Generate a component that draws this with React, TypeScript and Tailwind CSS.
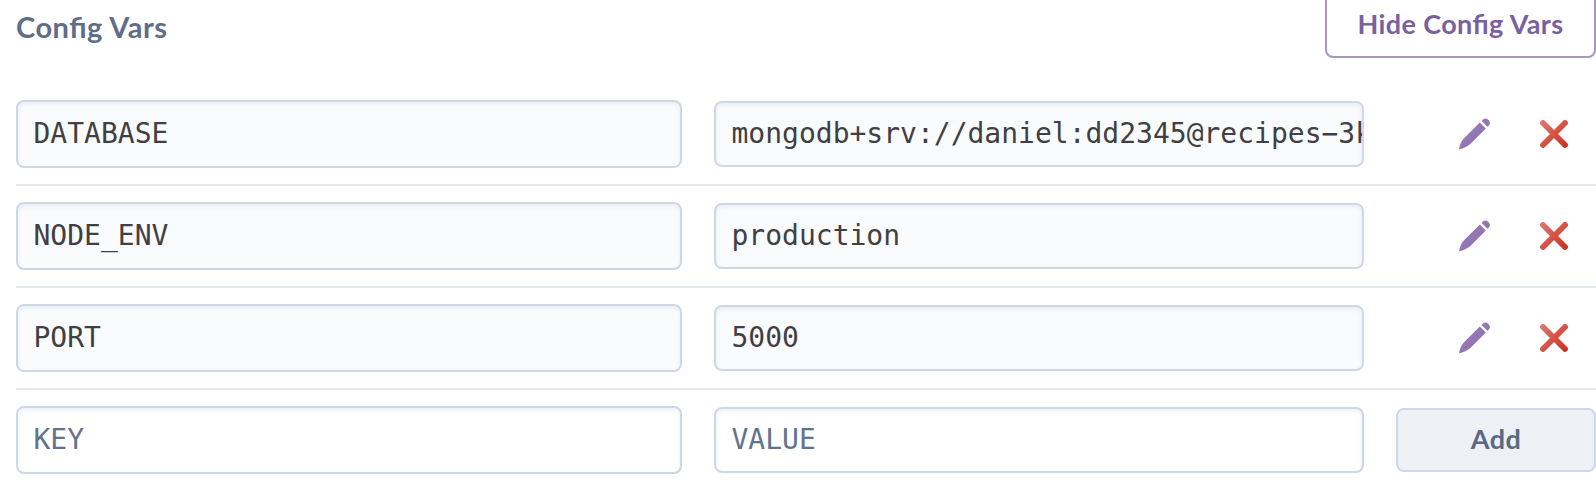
import React from "react";

const vars = [
  { key: "DATABASE", value: "mongodb+srv://daniel:dd2345@recipes−3k" },
  { key: "NODE_ENV", value: "production" },
  { key: "PORT", value: "5000" },
];

const mono = "font-['DejaVu_Sans_Mono',monospace] text-[28px] leading-[32px] whitespace-pre";
const field =
  "flex items-center overflow-hidden rounded-lg border-2 border-[#cfd7e6] pl-[15.5px] shadow-[inset_0_2px_4px_rgba(207,215,230,0.4)]";

function Field({ text, tall, blank }: { text: string; tall?: boolean; blank?: boolean }) {
  return (
    <div
      className={`${field} ${tall ? "h-[68px] w-[666px]" : "h-[66px] w-[650px]"} ${
        blank ? "bg-white text-[#62738d]" : "bg-[#fafbfd] text-[#3f3f44]"
      }`}
    >
      <span className={`${mono} min-w-0`}>{text}</span>
    </div>
  );
}

function Pencil() {
  return (
    <svg width="32" height="32" viewBox="0 0 32 32" className="block">
      <defs>
        <linearGradient id="pencil" x1="0" y1="0" x2="1" y2="1">
          <stop offset="0" stopColor="#9e7fbd" />
          <stop offset="1" stopColor="#8a6cab" />
        </linearGradient>
      </defs>
      <g fill="url(#pencil)">
        <path d="M20.8 4.5 26.8 10.4 11.3 26C8.4 28.8 4.4 30.3 0 31.2 .8 26.8 2.2 23 5 20.2Z" />
        <path d="M22.5 2.9 23.8 1.6C25.6 0 27.8.3 29.4 1.9 31.2 3.7 31.4 5.7 29.8 7.5L28.5 8.8Z" />
      </g>
    </svg>
  );
}

function Cross() {
  return (
    <svg width="28" height="28" viewBox="0 0 28 28" className="block">
      <defs>
        <linearGradient id="cross" gradientUnits="userSpaceOnUse" x1="0" y1="0" x2="28" y2="28">
          <stop offset="0" stopColor="#db7c74" />
          <stop offset="1" stopColor="#d02a18" />
        </linearGradient>
      </defs>
      <path d="M3 3 25 25M25 3 3 25" fill="none" stroke="url(#cross)" strokeWidth="5.8" strokeLinecap="round" />
    </svg>
  );
}

export default function App() {
  return (
    <div className="h-[492px] w-[1596px] overflow-hidden bg-white pl-4 font-['Lato',sans-serif]">
      <header className="flex h-[84px] items-start justify-between">
        <h2 className="pt-[9px] text-[29px] leading-[36px] font-bold tracking-[0.5px] text-[#5e6d88] [font-feature-settings:'liga']">
          Config Vars
        </h2>
        <button className="-mt-2 flex h-[66px] w-[271px] items-center justify-center rounded-lg border-2 border-[#a796c0] pb-[2px] text-[27px] font-bold tracking-[0.4px] text-[#79609f] [font-feature-settings:'liga']">
          Hide Config Vars
        </button>
      </header>
      {vars.map((v) => (
        <div key={v.key} className="flex h-[102px] items-center border-b-2 border-[#e6eaf0]">
          <Field text={v.key} tall />
          <div className="ml-8">
            <Field text={v.value} />
          </div>
          <div className="ml-[95px] flex items-center gap-[49px]">
            <Pencil />
            <Cross />
          </div>
        </div>
      ))}
      <div className="flex h-[100px] items-center gap-8">
        <Field text="KEY" tall blank />
        <Field text="VALUE" blank />
        <button className="h-16 w-[200px] rounded-lg border-2 border-[#cfd7e6] bg-[#edf0f5] pb-[2px] text-[27px] font-bold tracking-[0.4px] text-[#596981]">
          Add
        </button>
      </div>
    </div>
  );
}
